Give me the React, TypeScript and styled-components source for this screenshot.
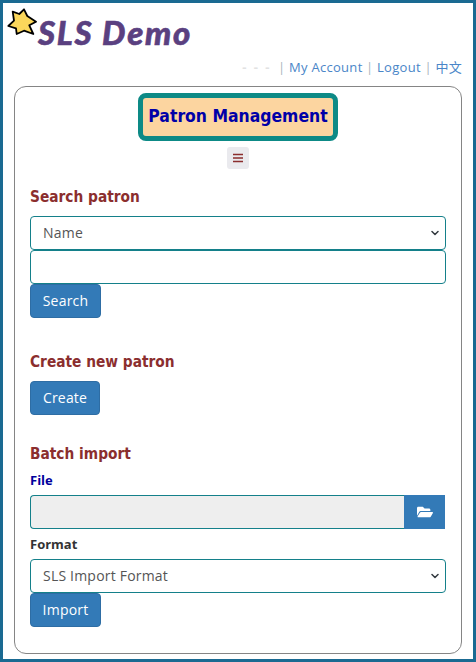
import { createGlobalStyle } from 'styled-components';
import styled from 'styled-components';
import { FaFolderOpen } from 'react-icons/fa';

const GlobalStyle = createGlobalStyle`
	html, body {
		margin: 0;
		padding: 0;
		background: #ffffff;
	}
	* {
		box-sizing: border-box;
	}
`;

const chevron =
	"url(\"data:image/svg+xml,%3Csvg xmlns='http://www.w3.org/2000/svg' viewBox='0 0 16 16'%3E%3Cpath fill='none' stroke='%23343a40' stroke-linecap='round' stroke-linejoin='round' stroke-width='3' d='m2 5 6 6 6-6'/%3E%3C/svg%3E\")";

export default function App() {
	return (
		<Frame>
			<GlobalStyle />
			<Header>
				<Star viewBox="0 0 30 30">
					<path
						d="M17 1.3 L20.3 8 L29 13.7 L22.3 17.3 L26.3 26 L17 22.7 L9.7 26 L9 20.3 L1.3 18 L7 12.7 L5.7 3.7 L12.3 6 Z"
						fill="#fbd75b"
						stroke="#000000"
						strokeWidth="1.8"
						strokeLinejoin="round"
					/>
				</Star>
				<Logo>SLS Demo</Logo>
			</Header>
			<TopLinks>
				<Dots>- - -</Dots>
				<Sep>|</Sep>
				<TopLink>My Account</TopLink>
				<Sep>|</Sep>
				<TopLink>Logout</TopLink>
				<Sep>|</Sep>
				<TopLink>中文</TopLink>
			</TopLinks>
			<Card>
				<TitleRow>
					<Title>Patron Management</Title>
				</TitleRow>
				<MenuRow>
					<MenuButton>
						<MenuBars viewBox="0 0 12 10">
							<path d="M1 1.5H11M1 5H11M1 8.5H11" stroke="#8b2e2e" strokeWidth="1.3" />
						</MenuBars>
					</MenuButton>
				</MenuRow>

				<Heading>Search patron</Heading>
				<Select defaultValue="Name">
					<option>Name</option>
				</Select>
				<TextInput type="text" />
				<Button $width={71}>Search</Button>

				<Heading $top={32}>Create new patron</Heading>
				<Button $width={70}>Create</Button>

				<Heading $top={27} $bottom={5}>Batch import</Heading>
				<FileLabel>File</FileLabel>
				<FileGroup>
					<FileField />
					<FileButton>
						<FaFolderOpen size={16} color="#ffffff" />
					</FileButton>
				</FileGroup>
				<FormatLabel>Format</FormatLabel>
				<Select defaultValue="SLS Import Format">
					<option>SLS Import Format</option>
				</Select>
				<Button $width={71}>Import</Button>
			</Card>
		</Frame>
	);
}

const Frame = styled.div`
	width: 476px;
	height: 662px;
	border: 3px solid #1a6a92;
	background-color: #ffffff;
	padding: 0 11px;
	overflow: hidden;
	font-family: 'Open Sans', 'Noto Sans CJK SC', sans-serif;
`;

const Header = styled.div`
	height: 52px;
	display: flex;
	align-items: flex-start;
	margin-left: -7px;
	padding-top: 5px;
`;

const Star = styled.svg`
	width: 30px;
	height: 30px;
	flex-shrink: 0;
`;

const Logo = styled.div`
	font-family: 'Lato', sans-serif;
	font-size: 33px;
	font-style: italic;
	font-weight: 900;
	line-height: 40px;
	letter-spacing: 1.7px;
	color: #5a4080;
	-webkit-text-stroke: 0.6px #5a4080;
	margin: 4px 0 0 1px;
	white-space: nowrap;
`;

const TopLinks = styled.div`
	height: 31px;
	padding-top: 3px;
	display: flex;
	justify-content: flex-end;
	align-items: flex-start;
	gap: 3.5px;
	font-size: 13px;
	line-height: 18px;
	letter-spacing: 0.3px;
`;

const Dots = styled.span`
	color: #e2e2e2;
	font-weight: 700;
	margin-right: 3px;
	letter-spacing: 2px;
`;

const Sep = styled.span`
	color: #a9b4bd;
`;

const TopLink = styled.a`
	color: #4a86c8;
`;

const Card = styled.div`
	height: 568px;
	border: 1px solid #858585;
	border-radius: 12px;
	padding: 6px 15px 0;
`;

const TitleRow = styled.div`
	display: flex;
	justify-content: center;
`;

const Title = styled.div`
	width: 200px;
	height: 48px;
	border: 5px solid #0d8a86;
	border-radius: 8px;
	background-color: #fcd5a0;
	color: #0000a8;
	font-family: 'DejaVu Sans', sans-serif;
	font-stretch: condensed;
	font-size: 17.4px;
	font-weight: 700;
	line-height: 36px;
	text-align: center;
	white-space: nowrap;
`;

const MenuRow = styled.div`
	display: flex;
	justify-content: center;
	margin-top: 6px;
`;

const MenuButton = styled.div`
	width: 22px;
	height: 22px;
	border-radius: 3px;
	background-color: #eaeaee;
	display: flex;
	align-items: center;
	justify-content: center;
`;

const MenuBars = styled.svg`
	width: 12px;
	height: 10px;
`;

const Heading = styled.h3<{ $top?: number; $bottom?: number }>`
	margin: ${(p) => p.$top ?? 16}px 0 ${(p) => p.$bottom ?? 7}px;
	font-family: 'DejaVu Sans', sans-serif;
	font-stretch: condensed;
	font-size: 15.3px;
	font-weight: 700;
	line-height: 24px;
	color: #8b2e2e;
`;

const Select = styled.select`
	display: block;
	width: 100%;
	height: 34px;
	padding: 0 12px 2px;
	appearance: none;
	border: 1px solid #14808a;
	border-radius: 4px;
	background-color: #ffffff;
	background-image: ${chevron};
	background-repeat: no-repeat;
	background-position: right 6px center;
	background-size: 8px 8px;
	color: #555555;
	font-family: 'Open Sans', sans-serif;
	font-size: 14px;
	letter-spacing: 0.2px;
`;

const TextInput = styled.input`
	display: block;
	width: 100%;
	height: 34px;
	border: 1px solid #14808a;
	border-radius: 4px;
	background-color: #ffffff;
`;

const Button = styled.button<{ $width: number }>`
	display: block;
	width: ${(p) => p.$width}px;
	height: 34px;
	padding: 0 0 1px;
	border: 1px solid #2e6da4;
	border-radius: 4px;
	background-color: #337ab7;
	color: #ffffff;
	font-family: 'Open Sans', sans-serif;
	font-size: 14px;
	letter-spacing: 0.2px;
`;

const FileLabel = styled.div`
	margin: 0 0 6px;
	font-family: 'Open Sans', sans-serif;
	font-size: 13px;
	font-weight: 700;
	line-height: 18px;
	color: #00009c;
`;

const FormatLabel = styled(FileLabel)`
	margin-top: 6px;
	color: #333333;
`;

const FileGroup = styled.div`
	display: flex;
	width: 415px;
	height: 34px;
`;

const FileField = styled.div`
	flex: 1;
	border: 1px solid #14808a;
	border-right: none;
	border-radius: 4px 0 0 4px;
	background-color: #eeeeee;
`;

const FileButton = styled.div`
	width: 41px;
	background-color: #337ab7;
	display: flex;
	align-items: center;
	justify-content: center;
`;
